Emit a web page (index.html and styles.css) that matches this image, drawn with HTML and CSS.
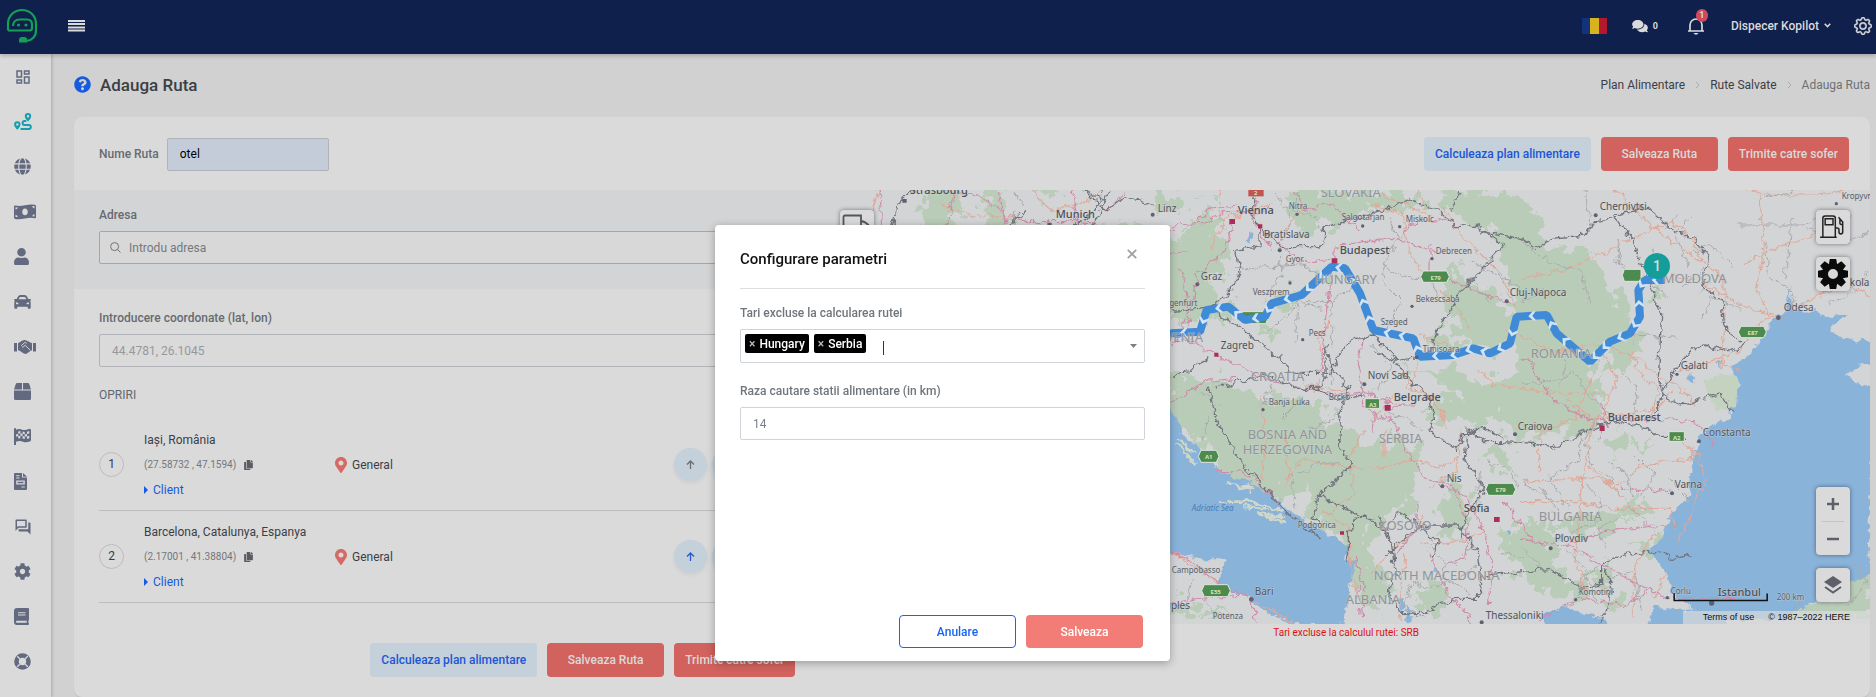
FILE: index.html
```html
<!DOCTYPE html>
<html lang="ro">
<head>
<meta charset="utf-8">
<title>Adauga Ruta</title>
<link rel="stylesheet" href="styles.css">
</head>
<body>
<svg class="defs" aria-hidden="true">
  <defs>
    <symbol id="pin" viewBox="0 0 384 512"><path d="M172.268 501.67C26.97 291.031 0 269.413 0 192 0 85.961 85.961 0 192 0s192 85.961 192 192c0 77.413-26.97 99.031-172.268 309.67-9.535 13.774-29.93 13.773-39.464 0zM192 272c44.183 0 80-35.817 80-80s-35.817-80-80-80-80 35.817-80 80 35.817 80 80 80z"/></symbol>
    <symbol id="copy" viewBox="0 0 448 512"><path d="M320 448v40c0 13.255-10.745 24-24 24H24c-13.255 0-24-10.745-24-24V120c0-13.255 10.745-24 24-24h72v296c0 30.879 25.121 56 56 56h168zm0-344V0H152c-13.255 0-24 10.745-24 24v368c0 13.255 10.745 24 24 24h272c13.255 0 24-10.745 24-24V128H344c-13.2 0-24-10.8-24-24zm120.971-31.029L375.029 7.029A24 24 0 0 0 358.059 0H352v96h96v-6.059a24 24 0 0 0-7.029-16.97z"/></symbol>
    <symbol id="cog" viewBox="0 0 512 512"><path d="M487.4 315.7l-42.6-24.6c4.3-23.2 4.3-47 0-70.2l42.6-24.6c4.9-2.8 7.1-8.6 5.5-14-11.1-35.6-30-67.8-54.7-94.6-3.8-4.1-10-5.1-14.8-2.3L380.8 110c-17.9-15.4-38.5-27.3-60.8-35.1V25.8c0-5.6-3.9-10.5-9.4-11.7-36.7-8.2-74.3-7.8-109.2 0-5.5 1.2-9.4 6.1-9.4 11.7V75c-22.2 7.9-42.8 19.8-60.8 35.1L88.7 85.5c-4.9-2.8-11-1.9-14.8 2.3-24.7 26.7-43.6 58.9-54.7 94.6-1.7 5.4.6 11.2 5.5 14L67.3 221c-4.3 23.2-4.3 47 0 70.2l-42.6 24.6c-4.9 2.8-7.1 8.6-5.5 14 11.1 35.6 30 67.8 54.7 94.6 3.8 4.1 10 5.1 14.8 2.3l42.6-24.6c17.9 15.4 38.5 27.3 60.8 35.1v49.2c0 5.6 3.9 10.5 9.4 11.7 36.7 8.2 74.3 7.8 109.2 0 5.5-1.2 9.4-6.1 9.4-11.7v-49.2c22.2-7.9 42.8-19.8 60.8-35.1l42.6 24.6c4.9 2.8 11 1.9 14.8-2.3 24.7-26.7 43.6-58.9 54.7-94.6 1.5-5.5-.7-11.3-5.6-14.1zM256 336c-44.1 0-80-35.9-80-80s35.9-80 80-80 80 35.9 80 80-35.9 80-80 80z"/></symbol>
    <symbol id="pump" viewBox="0 0 28 26"><g fill="none" stroke="currentColor" stroke-width="1.6"><path d="M3 24V3.500Q3 1 5.500 1h8.500Q16.500 1 16.500 3.500V24M0 24.200h18M5.500 4h8.500v6.500h-8.500zM16.500 14h2q2 0 2 2v2.500q0 2 2 2t2-2V7.500L20 2.500M21.500 4.500v4.500q0 1.500 3 1.500"/></g></symbol>
  </defs>
</svg>

<header class="topbar">
  <a class="logo" href="#" aria-label="Kopilot"><svg width="32" height="36" viewBox="0 0 32 36"><g fill="none" stroke="#12a154" stroke-width="2.200"><path d="M2 22.500V16C2 7.500 8.500 2 16 2s14 5.500 14 14v6.500c0 6-4 10-9.500 10.500"/><path d="M2 22.500h21.500q2.500 0 2.500-2.500v-3.500c0-3-2-5-5-5h-7c-5 0-7 3-7 6.500"/></g><circle cx="12.500" cy="17" r="1.600" fill="#12a154"/><circle cx="20" cy="17" r="1.600" fill="#12a154"/><path d="M13 34.500v-2.500q0-3 3-3h2.500q2.500 0 2.500 2.500v3z" fill="#12a154"/></svg></a>
  <button class="icon-btn burger" type="button" aria-label="Meniu"><svg width="17" height="12" viewBox="0 0 17 12"><path d="M0 1h17M0 4h17M0 7.500h17M0 10.500h17" stroke="#dadada" stroke-width="1.800"/></svg></button>
  <nav class="top-tools">
    <button class="icon-btn flag" type="button" aria-label="Romana"><svg width="25" height="16" viewBox="0 0 25 16"><path fill="#123279" d="M0 0h8v16H0z"/><path fill="#d9b31f" d="M8 0h9v16H8z"/><path fill="#b21a2c" d="M17 0h8v16h-8z"/></svg></button>
    <button class="icon-btn chat" type="button"><svg width="16" height="14" viewBox="0 0 576 512"><path fill="#dadada" d="M416 192c0-88.400-93.100-160-208-160S0 103.600 0 192c0 34.300 14.100 65.900 38 92-13.400 30.200-35.500 54.200-35.800 54.500-2.200 2.300-2.800 5.700-1.500 8.700S4.800 352 8 352c36.600 0 66.900-12.300 88.700-25 32.200 15.700 70.300 25 111.300 25 114.900 0 208-71.600 208-160zm122 220c23.900-26 38-57.700 38-92 0-66.900-53.500-124.200-129.300-148.100.9 6.600 1.300 13.300 1.300 20.100 0 105.900-107.700 192-240 192-10.800 0-21.300-.8-31.700-1.900C207.800 439.600 281.800 480 368 480c41 0 79.100-9.200 111.300-25 21.800 12.700 52.100 25 88.700 25 3.200 0 6.100-1.900 7.300-4.800 1.300-2.900.7-6.300-1.500-8.700-.3-.3-22.400-24.200-35.800-54.500z"/></svg><span>0</span></button>
    <button class="icon-btn bell" type="button" aria-label="Notificari"><svg width="18" height="18" viewBox="0 0 18 18"><path d="M1 14h16M3 14V8a6 6 0 0 1 12 0v6" fill="none" stroke="#dadada" stroke-width="1.700"/><path d="M6.500 16h5q-.8 1.800-2.500 1.800T6.500 16z" fill="#dadada"/></svg><span class="badge">1</span></button>
    <button class="icon-btn account" type="button">Dispecer Kopilot<svg width="7" height="5" viewBox="0 0 7 5"><path d="M.7.8l2.800 2.800L6.300.8" fill="none" stroke="#dadada" stroke-width="1.500"/></svg></button>
    <button class="icon-btn gear" type="button" aria-label="Setari"><svg width="18" height="18" viewBox="0 0 16 16" fill="#dadada" stroke="#dadada" stroke-width=".5"><path d="M8 4.754a3.246 3.246 0 1 0 0 6.492 3.246 3.246 0 0 0 0-6.492zM5.754 8a2.246 2.246 0 1 1 4.492 0 2.246 2.246 0 0 1-4.492 0z"/><path d="M9.796 1.343c-.527-1.790-3.065-1.790-3.592 0l-.094.319a.873.873 0 0 1-1.255.52l-.292-.16c-1.640-.892-3.433.902-2.540 2.541l.159.292a.873.873 0 0 1-.52 1.255l-.319.094c-1.790.527-1.790 3.065 0 3.592l.319.094a.873.873 0 0 1 .52 1.255l-.16.292c-.892 1.640.901 3.434 2.541 2.540l.292-.159a.873.873 0 0 1 1.255.52l.094.319c.527 1.790 3.065 1.790 3.592 0l.094-.319a.873.873 0 0 1 1.255-.52l.292.16c1.640.893 3.434-.902 2.540-2.541l-.159-.292a.873.873 0 0 1 .52-1.255l.319-.094c1.790-.527 1.790-3.065 0-3.592l-.319-.094a.873.873 0 0 1-.52-1.255l.16-.292c.893-1.640-.902-3.433-2.541-2.540l-.292.159a.873.873 0 0 1-1.255-.52l-.094-.319zm-2.633.283c.246-.835 1.428-.835 1.674 0l.094.319a1.873 1.873 0 0 0 2.693 1.115l.291-.16c.764-.415 1.600.42 1.184 1.185l-.159.292a1.873 1.873 0 0 0 1.116 2.692l.318.094c.835.246.835 1.428 0 1.674l-.319.094a1.873 1.873 0 0 0-1.115 2.693l.16.291c.415.764-.42 1.600-1.185 1.184l-.291-.159a1.873 1.873 0 0 0-2.693 1.116l-.094.318c-.246.835-1.428.835-1.674 0l-.094-.319a1.873 1.873 0 0 0-2.692-1.115l-.292.16c-.764.415-1.600-.42-1.184-1.185l.159-.291A1.873 1.873 0 0 0 1.945 8.930l-.319-.094c-.835-.246-.835-1.428 0-1.674l.319-.094A1.873 1.873 0 0 0 3.060 4.377l-.16-.292c-.415-.764.42-1.600 1.185-1.184l.292.159a1.873 1.873 0 0 0 2.692-1.115l.094-.319z"/></svg></button>
  </nav>
</header>

<div class="shell">
  <nav class="sidebar" aria-label="Navigare">
    <a href="#" aria-label="Panou"><svg width="18" height="18" viewBox="0 0 24 24"><path d="M19 5v2h-4V5h4M9 5v6H5V5h4m10 8v6h-4v-6h4M9 17v2H5v-2h4M21 3h-8v6h8V3zM11 3H3v10h8V3zm10 8h-8v10h8V11zm-10 4H3v6h8v-6z"/></svg></a>
    <a class="active" href="#" aria-label="Rute"><svg width="18" height="17" viewBox="0 0 18 17"><path d="M3.300 8.200A3.200 3.200 0 0 0 .1 11.400c0 1.800 1.400 3.400 3.200 5.400 1.800-2 3.200-3.600 3.200-5.400a3.200 3.200 0 0 0-3.200-3.200zm0 2a1.200 1.200 0 1 1 0 2.400 1.200 1.200 0 0 1 0-2.400zM14 0a3.200 3.200 0 0 0-3.200 3.200c0 1.800 1.400 3.400 3.200 5.400 1.800-2 3.200-3.600 3.200-5.400A3.200 3.200 0 0 0 14 0zm0 2a1.200 1.200 0 1 1 0 2.400A1.200 1.200 0 0 1 14 2z"/><path d="M6.500 15.900h8.300a1.800 1.800 0 0 0 0-4h-4.200a2 2 0 0 1 0-4h1.700" fill="none" stroke="currentColor" stroke-width="2"/></svg></a>
    <a href="#" aria-label="Harta"><svg width="17" height="17" viewBox="0 0 496 512"><path d="M336.500 160C322 70.700 287.800 8 248 8s-74 62.700-88.500 152h177zM152 256c0 22.200 1.200 43.500 3.300 64h185.300c2.100-20.500 3.300-41.800 3.300-64s-1.200-43.500-3.300-64H155.300c-2.100 20.500-3.300 41.800-3.300 64zm324.700-96c-28.600-67.900-86.500-120.400-158-141.600 24.400 33.800 41.200 84.700 50 141.600h108zM177.200 18.400C105.800 39.600 47.800 92.100 19.300 160h108c8.700-56.900 25.500-107.800 49.900-141.600zM487.400 192H372.700c2.100 21 3.300 42.500 3.300 64s-1.200 43-3.300 64h114.600c5.500-20.500 8.600-41.800 8.600-64s-3.100-43.500-8.500-64zM120 256c0-21.500 1.200-43 3.300-64H8.600C3.200 212.500 0 233.800 0 256s3.200 43.500 8.600 64h114.600c-2-21-3.200-42.500-3.200-64zm39.500 96c14.500 89.300 48.700 152 88.500 152s74-62.700 88.500-152h-177zm159.300 141.600c71.400-21.200 129.400-73.700 158-141.600h-108c-8.800 56.900-25.600 107.800-50 141.600zM19.300 352c28.600 67.900 86.500 120.400 158 141.600-24.400-33.800-41.200-84.700-50-141.600h-108z"/></svg></a>
    <a href="#" aria-label="Costuri"><svg width="22" height="16" viewBox="0 0 22 16"><path fill-rule="evenodd" d="M0 2.500q0-1.300 1.300-1 4.200 1 9.700-.3T20.800.7q1.200.3 1.200 1.500v11q0 1.300-1.300 1-4.200-1-9.700.3t-9.800.5Q0 14.700 0 13.500zM11 4.600c-1.600 0-2.800 1.500-2.800 3.300s1.200 3.300 2.800 3.300 2.800-1.500 2.800-3.300S12.600 4.600 11 4.600zM1.500 3.300v2.200q2 0 2.200-2zM20.500 2.300q-2-.4-2.200 0 .2 2 2.200 2.200zM1.500 13v-2.200q2 .2 2.200 2.200zM20.500 12.500v-2.200q-2 .2-2.200 2z"/></svg></a>
    <a href="#" aria-label="Soferi"><svg width="15" height="17" viewBox="0 0 448 512"><path d="M224 256c70.700 0 128-57.300 128-128S294.700 0 224 0 96 57.300 96 128s57.300 128 128 128zm89.600 32h-16.700c-22.200 10.200-46.900 16-72.900 16s-50.600-5.800-72.900-16h-16.700C60.200 288 0 348.200 0 422.400V464c0 26.500 21.500 48 48 48h352c26.500 0 48-21.500 48-48v-41.600c0-74.200-60.200-134.400-134.400-134.400z"/></svg></a>
    <a href="#" aria-label="Vehicule"><svg width="17" height="14" viewBox="0 0 17 14"><path fill-rule="evenodd" d="M3.800 1.800Q4.500 0 6.500 0h4q2 0 2.700 1.800L14.200 4H16q1 0 1 .8t-.9.900H16q.7.600.7 1.800v5.300q0 .9-.9.900h-1.200q-.9 0-.9-.9v-1H3.300v1q0 .9-.9.900H1.200q-.9 0-.9-.9V7.500q0-1.200.7-1.800H.9Q0 5.600 0 4.800T1 4h1.800zM4.700 4.300h7.600l-.8-1.700q-.3-.7-1-.7h-4q-.7 0-1 .7zM2 7.200v1.200q0 .9 1.300.9t1.400-.6Q4.500 7.300 2 7.200zm13 0q-2.500.1-2.700 1.500 0 .6 1.400.6T15 8.400z"/></svg></a>
    <a href="#" aria-label="Parteneri"><svg width="22" height="14" viewBox="0 0 22 14"><path d="M0 3h3v8.500H0zM19 3h3v8.500h-3z"/><path d="M4 3.200L8 .8Q10.500-.6 13 .8l5 2.400v7.300h-1l-4 3q-2 1-4-.4L5.200 10.500H4z"/><path d="M7.200 5.700l4-3.500 1.600 1.300M11.200 5.200l5 5M8 7q1.500.5 3.200-1.800" fill="none" stroke="#dadada" stroke-width=".9"/></svg></a>
    <a href="#" aria-label="Marfa"><svg width="17" height="17" viewBox="0 0 512 512"><path d="M509.500 184.600L458.900 32.800C452.400 13.200 434.100 0 413.400 0H272v192h238.700c-.4-2.500-.4-5-1.200-7.400zM240 0H98.600c-20.700 0-39 13.200-45.500 32.800L2.500 184.600c-.8 2.400-.8 4.900-1.200 7.400H240V0zM0 224v240c0 26.500 21.500 48 48 48h416c26.500 0 48-21.500 48-48V224H0z"/></svg></a>
    <a href="#" aria-label="Curse"><svg width="17" height="17" viewBox="0 0 17 17"><path fill-rule="evenodd" d="M0 1a1 1 0 0 1 2 0v.8q3-1.200 5.500-.3t5 .3l3-1Q17 1 17 2v10q0 .8-.8 1.200-4 1.800-7.200.5-3.300-1.200-7 .1V17H0zM4.200 3.400v2.300l2.200-.4V3zM8.600 3.400v2.300l2.200.5V3.900zM13 3.700v2.400l2.300-.7V3zM6.400 5.300v2.500l2.200.3V5.700zM10.800 6.200v2.400l2.200-.2V6.100zM2 6.500v2.300l2.200-.7V5.700zM4.200 8.100v2.400l2.200-.3V7.800zM8.600 8.100v2.500l2.200.5V8.600zM13 8.400v2.500l2.300-.7V7.800z"/></svg></a>
    <a href="#" aria-label="Documente"><svg width="13" height="17" viewBox="0 0 13 17"><path fill-rule="evenodd" d="M0 1q0-1 1-1h7v4.500h5V16q0 1-1 1H1q-1 0-1-1zM9 0l4 3.700H9zM2.200 2.200v1h3.300v-1zM2.200 4.400v1h3.300v-1zM2.200 7.500v4h8.600v-4zM3.500 8.700h6v1.600h-6zM7.500 13.500v1h3.300v-1z"/></svg></a>
    <a href="#" aria-label="Mesaje"><svg width="18" height="18" viewBox="0 0 24 24"><path d="M15 4v7H5.170L4 12.170V4h11m1-2H3c-.55 0-1 .45-1 1v14l4-4h10c.55 0 1-.45 1-1V3c0-.55-.45-1-1-1zm5 4h-2v9H6v2c0 .55.45 1 1 1h11l4 4V7c0-.55-.45-1-1-1z"/></svg></a>
    <a href="#" aria-label="Setari"><svg width="17" height="17"><use href="#cog"/></svg></a>
    <a href="#" aria-label="Manual"><svg width="15" height="17" viewBox="0 0 15 17"><path fill-rule="evenodd" d="M0 3q0-3 3-3h11q1 0 1 1v10.500q0 .6-.5.900-.3 1.200 0 2.500.5.200.5.700v.4q0 1-1 1H3q-3 0-3-3zM4 4.200v1h7.500v-1zM4 6.400v1h7.500v-1zM3 12.800q-1 0-1 1t1 1h9.700v-2z"/></svg></a>
    <a href="#" aria-label="Ajutor"><svg width="17" height="17" viewBox="0 0 17 17"><circle cx="8.500" cy="8.500" r="6" fill="none" stroke="currentColor" stroke-width="4.600"/><path d="M3.200 3.200l2.600 2.600M13.800 3.200l-2.600 2.600M3.200 13.800l2.600-2.600M13.800 13.800l-2.600-2.600" stroke="#dadada" stroke-width="1.300"/></svg></a>
  </nav>

  <main class="page">
    <div class="page-head">
      <svg class="help" width="17" height="17" viewBox="0 0 512 512"><path d="M504 256c0 136.997-111.043 248-248 248S8 392.997 8 256C8 119.083 119.043 8 256 8s248 111.083 248 248zM262.655 90c-54.497 0-89.255 22.957-116.549 63.758-3.536 5.286-2.353 12.415 2.715 16.258l34.699 26.310c5.205 3.947 12.621 3.008 16.665-2.122 17.864-22.658 30.113-35.797 57.303-35.797 20.429 0 45.698 13.148 45.698 32.958 0 14.976-12.363 22.667-32.534 33.976C247.128 238.528 216 254.941 216 296v4c0 6.627 5.373 12 12 12h56c6.627 0 12-5.373 12-12v-1.333c0-28.462 83.186-29.647 83.186-106.667 0-58.002-60.165-102-116.531-102zM256 338c-25.365 0-46 20.635-46 46 0 25.364 20.635 46 46 46s46-20.636 46-46c0-25.365-20.635-46-46-46z"/></svg>
      <h1>Adauga Ruta</h1>
      <nav class="crumbs" aria-label="Locatie">
        <a href="#">Plan Alimentare</a>
        <svg width="5" height="8" viewBox="0 0 5 8"><path d="M1 1l3 3-3 3"/></svg>
        <a href="#">Rute Salvate</a>
        <svg width="5" height="8" viewBox="0 0 5 8"><path d="M1 1l3 3-3 3"/></svg>
        <span>Adauga Ruta</span>
      </nav>
    </div>

    <section class="card">
      <div class="card-head">
        <label for="route-name">Nume Ruta</label>
        <input class="field name" id="route-name" type="text" value="otel">
        <div class="actions">
          <button class="btn soft" type="button">Calculeaza plan alimentare</button>
          <button class="btn red" type="button">Salveaza Ruta</button>
          <button class="btn red" type="button">Trimite catre sofer</button>
        </div>
      </div>
      <div class="split">
        <div class="form-col">
          <div class="address">
            <label for="address">Adresa</label>
            <div class="search">
              <svg width="11" height="11" viewBox="0 0 11 11"><circle cx="4.600" cy="4.600" r="4"/><path d="M7.500 7.500l3 3"/></svg>
              <input id="address" type="text" placeholder="Introdu adresa">
            </div>
          </div>
          <div class="coords">
            <label for="coords">Introducere coordonate (lat, lon)</label>
            <input class="field" id="coords" type="text" placeholder="44.4781, 26.1045">
          </div>
          <h2>OPRIRI</h2>
          <ol class="stops">
            <li>
              <span class="num">1</span>
              <div class="place"><p>Iași, România</p><p class="pos">(27.58732 , 47.1594)<svg width="9" height="10"><use href="#copy"/></svg></p><a href="#"><svg width="4" height="8" viewBox="0 0 4 8"><path d="M0 0l4 4-4 4z"/></svg>Client</a></div>
              <div class="kind"><svg width="12" height="16"><use href="#pin"/></svg>General</div>
              <div class="moves"><button class="round off" type="button" aria-label="Sus"><svg width="9" height="9" viewBox="0 0 9 9"><path d="M4.500 9V1M1 4.500L4.500 1 8 4.500"/></svg></button><button class="round" type="button" aria-label="Jos"><svg width="9" height="9" viewBox="0 0 9 9"><path d="M4.500 0v8M1 4.500L4.500 8 8 4.500"/></svg></button></div>
            </li>
            <li>
              <span class="num">2</span>
              <div class="place"><p>Barcelona, Catalunya, Espanya</p><p class="pos">(2.17001 , 41.38804)<svg width="9" height="10"><use href="#copy"/></svg></p><a href="#"><svg width="4" height="8" viewBox="0 0 4 8"><path d="M0 0l4 4-4 4z"/></svg>Client</a></div>
              <div class="kind"><svg width="12" height="16"><use href="#pin"/></svg>General</div>
              <div class="moves"><button class="round" type="button" aria-label="Sus"><svg width="9" height="9" viewBox="0 0 9 9"><path d="M4.500 9V1M1 4.500L4.500 1 8 4.500"/></svg></button><button class="round off" type="button" aria-label="Jos"><svg width="9" height="9" viewBox="0 0 9 9"><path d="M4.500 0v8M1 4.500L4.500 8 8 4.500"/></svg></button></div>
            </li>
          </ol>
          <div class="actions bottom">
            <button class="btn soft" type="button">Calculeaza plan alimentare</button>
            <button class="btn red" type="button">Salveaza Ruta</button>
            <button class="btn red" type="button">Trimite catre sofer</button>
          </div>
        </div>

        <div class="map-col">
          <div class="map">
            <svg class="tiles" viewBox="820 190 1048 434" preserveAspectRatio="xMaxYMin slice" role="img" aria-label="Harta rutei">
              <defs>
                <filter id="rough" x="0" y="0" width="100%" height="100%"><feTurbulence type="fractalNoise" baseFrequency=".12" numOctaves="3" seed="4"/><feDisplacementMap in="SourceGraphic" scale="10" xChannelSelector="R" yChannelSelector="G"/></filter>
                <filter id="patchy" x="0" y="0" width="100%" height="100%"><feTurbulence type="fractalNoise" baseFrequency=".07" numOctaves="4" seed="9"/><feDisplacementMap in="SourceGraphic" scale="40" xChannelSelector="R" yChannelSelector="G"/></filter>
              </defs>
              <rect x="820" y="190" width="1049" height="434" fill="#d3d4d6"/>
              <g filter="url(#patchy)"><g transform="translate(1170 185) scale(.33333)" fill="#b9ccb7">
                <path d="M-760 60l60-45h80l-40 110-70 60zM-560 40l50-20 20 90-60 40zM-1000 160l90-20 20 40-90 40zM-420 15h60v30zM-60 15h60l20 50-70 30zM-260 150l120-40 120 60 120-50 60 60-40 130-50 60-60-20-50 80h-130z"/>
                <path d="M0 180l100-50 60 20 20 70-60 80-60 40-70-20-20-60zM0 330l140-10 60 60-60 20H20l-30-30zM30 120l80-30 40 30-60 30zM90 20h60v40zM340 40l160-20 230 0 40 30-80 40-60-20-90 20-120 50-70-20zM800 20h250v120l-60 10-110-40-70-50zM410 300l40-60 30 20-20 40zM320 340l50-20-10 40-60 20zM260 440l40-10 20 30-40 10z"/>
                <path d="M1050 40l40 60 40 80 110 10 60 60 30 90 60 70 20 90-30 20-90-20-60 110 60 70-20 70-150-10-90 40-60-80-60 20-40-80-60-50-100-30 100-10 130 40 100-20 10-80-70-60 60-80-20-60-50-110z"/>
                <path d="M820 300l40-60 20 60 80 10 60 70-20 100-60 30-90-80-30-80zM830 640l80-20 60 20 60 30-90 50-100-10-80-20 60-50zM760 460l60-30 60 60-90 20zM1200 600l90-20 30-100 70-20 10 50-100 60-30 100-70 10zM1440 300l20-60 10 90-40 40z"/>
                <path d="M0 560l100 20 90 20 80 50 80-20 80 20 60 70 100 60 120 50 20 90-60 80-60-20-40 60-60-80-120-40-90 0-60 80-80-110-80-120-80-60-60-50z"/>
                <path d="M580 800l110-50 60 60-20 80-80 20 100 50-60 30-70-40-40 30-60-50-60-20 80-20zM820 900l50-20 30 60-10 70-70 60-20-60zM440 880l70 20 130 80-50 100 60 110-20 80-110-50 20-120-80-80-80 0zM1050 1000l80 30 40 60-20 80-80-20-50-80zM1150 1000l160-20 80 30-100 30-140 0zM1340 960l80-20 10 50-80 10zM1060 1060l100 50 20 70 80 10-40 60-100-30-90-60zM1250 1160l60-20 10 60-40 20zM1370 1080l60-20 80 30v30l-80-10zM980 1030l60 20 60 100-80-20zM940 800l60-20 30 60-60 20zM720 1230l60-40 60 40-50 70z"/>
                <path d="M1620 1240l100 20 150-10 140-20 80-20v90h-440zM1900 1210l80-60 60-20 60-10v90l-100 20zM1310 770l40-40 20 60-40 30zM1380 780l70-10-30 40zM1270 1240l60 0 30 30-60 0z"/>
                <path d="M0 1290l60-40 30 50H0zM80 1290l60-20 60 20z"/>
              </g></g>
              <g filter="url(#rough)"><g transform="translate(1170 185) scale(.33333)">
                <g fill="#8ab3da">
                  <path d="M-1050 1000L0 1105l90 18 70 0-8 50-20 30 40 15 70 32 60 38 60 30 160 5 4-95 20-55 8-48-34-4-20-52-70-45-80-45-50-50-70-40-90-30-10-30-45-35-45-40-30-60-30-50-20-70z"/>
                  <path d="M2110 472l-60-6-60-14-10-30 50-34-70 8-35-20-100 4-25 30-25 50-50 55-40 25-5 40 5 20-5 40-10 62-54 22-30 34-20 40-10 95-10 55-50 35-17 70-48 42 25 30 30 40 15 60 50 40 70 30 110 10 100 2 50-32 50-30 85-50 73-18z"/>
                  <path d="M1130 1330l-20-40 70-25 60 25 60 5 10 40zM1420 1330l30-65 80 10 120-5 20 60zM675 1240l20 0 8 30-20 10zM705 1265l15 10-5 40-15-10zM500 1070l30 15 8 30-30-10zM225 170l10-30 8 5-10 30zM1550 580l8-25 8 40-12-5zM1645 560l-5-30 8 0zM1855 300l8 80-16-4zM1955 330l10-60 4 40zM1000 1040l15-8 10 15-15 5zM780 1160l10-12 8 12z"/>
                </g>
                <path fill="#c3d3bf" d="M1600 590l50-20 40 0 12 30-6 65-60 15-30-50z"/>
                <path fill="#d3d4d6" d="M2020 570l40-25 50-10v75l-60-20zM190 900l40-5 15 12-35 8z"/>
                <path d="M10 775l60 60M20 760l50 50M170 950l60 0 70 15 30 20M215 965l80 10M260 988l80 10M165 895l80 20M290 1000l50 10M145 950h18" fill="none" stroke="#cfd8c8" stroke-width="8"/>
                <g fill="none" stroke="#dfa999" stroke-width="3.500">
                  <path d="M145 15l5 90M270 640l10 120-10 120M400 600l130 20M340 735l10 170M340 880l60-60 130 30 100 0 90-30 80 30 60-30M640 735v80M700 560l10 50 80 30 40 90M660 640l-60 70M740 520l-20 100M920 550l50 50 140 20 200 10M800 310l50 50 40 70M830 480l-90-30M1000 430l150 70 150-20 100 40 60 60 60 20 50 60M810 60l60 90 60 60 60 60 40 90M740 15l20 60M1050 280l120-20 130-60 100-50 100-40 70 60 20 60M1330 15l100 100 90 70 80 50 60 50 0 120-10 150M1700 0l80 30 160 0 100-20M1765 30l10 150-20 130 40 90M1720 230l200-80 120-60M1520 560l180-60 60-80 60-30M1500 270l100 30 110 60 120 40M1860 380l100-60 80-20 60 40M1380 430l10 120 70 60-20 90M1280 500l60 80-50 100-40 60M1180 640l80 60 200-30 40-50M1270 560l-60 140-100 40-10 120M1260 740l-30 150-20 230 40 130M1050 890l200-10 100 20 60-60 160-20M1050 950h160l100 20 180 0 20 60M1530 770l50 40 20 70-30 80-50 110M1250 840l80 70 70 80M1380 1300l10-160 60-100"/>
                  <path d="M870 740l-20 120-80 50M580 735l-50 80 20 110-70 60M450 970l80 60 10 140 30 100M600 1160l60-60 60-50 40-70M700 1110l-20 150 10 50M740 1080l120-10 80-30M0 1105l100 60 60 60M200 1225l100 50 60 38M1450 1240l30-80M-880 15l-30 110 40 130M-700 60l90 30 160 10M-420 15l60 60 90-20 60-40M1700 560l-60-30"/>
                  <path d="M480 400l-40 60 10 90-20 80M120 190l40-90 130-40M400 60l-60 70M590 60l100 20 20 110 50 90M630 30l150 60"/>
                </g>
                <g fill="none" stroke="#cf8ba8" stroke-width="3.500">
                  <path d="M0 120l100-5 60-35h110l30-20M80 110l30-40 90-10M180 110l-20 90-80 60-40 200 90 50 90 40 80 40 200 40 80-10 100 40 50 0M265 125l80 70 60 40 80-10M300 190l-60 -90 20-85M490 180l0 50-20 90-20 200 0 40M500 180l160-20 40 10 90 30M570 450l-10 80 20 130 20 30 60 10 50 100 50 80 80 20 50 120-10 100-60 20M660 670l40-10M610 680l-10 60M690 160l20-40 120-20M775 180l0 90 60 10M830 285l100 40 90 30M30 250l20 130-40 100M0 650l100-60 90-10M370 15l30 60 80-20 80 80M-880 15l10 100-50 90M-650 15l-20 100-90 60M-640 20l70 20 80 50 60 20 200 0M-520 15l30 130M-300 15l20 100 120 20 100 40M-200 80l60-60M-170 150l100 60 120-10M-130 140l140-10M-450 140l200 10M-760 120l40 60"/>
                  <path d="M1050 520l30 10 10 40 60 80 100 50 60 0 200 5 70 10 50 70M1290 650l10 60-20 60M1350 910l150 10M1050 1060l30 10 100 10 120 60 100 60 90 40 70 0 130 0M1190 1080l110-40 140-20M1100 1310l120-70 150 20 60-50M130 860l80 0 60 40 60 70M800 900l80 30 60 110 20 100-10 120M1000 950l80 120M770 1100l60 130 60 60 10 30M670 1110l60-70 10-80M0 1105l70 25 30 40 140 80M0 1260l80-20 140-10M235 1250l20 60M560 1200l10 100M550 1110l30 110"/>
                </g>
                <g fill="none" stroke="#a9a9ac" stroke-width="3">
                  <path d="M310 15l50 90-30 60M380 15l-20 60 70 20 40 70M190 250l200-10 70 40M330 190v80l-60 80M400 350l80 0 70-50M290 440l90-80M370 470l10-120 70 20M480 350l0 140M640 230l-10 60 60 60-50 90M650 100l30 60-40 80 60 40 80 0 20 60M860 320l40-40 60 80M900 230l80 40 70 50M1050 170l80 60 100 30 20 100M1110 320l-60 30M1240 15l20 120M1340 160l0 80M1330 230l80 60-20 160 130 10M1450 180l-30 100 80 60M1560 90l-50 60 40 100M1480 130l40-40M1560 200l60-20 60 70M1580 330l60-60M1590 400l30-60 90 30M1600 250l-60 50M1700 120l200 0 60-40M1780 40l80-20 40-60M1780 170l10 100 80 60-20 60-60 30M1860 100l-20 180M1910 130l120 40 60-30M1970 360l80-40 40-60M1160 600l40-40 60 80 60 60M1180 520l0 60-130 20M1350 560l50 60-20 80M1230 760l0 60-100 60 60 90M1280 700l-40 60 20 80M1240 890l50 60-20 70-80 20M1290 850l60 80M1300 830l60 30 20 70M1390 810l60 60-40 60M1100 900l60 80M1340 1000l-60 30 20 60M1340 1110l-100 60 40 80M1050 890l100 60M1490 880l60 60M1380 970l60 60 80-10M1390 1160l20 120M1300 1180l80-20M1050 1090l60 60M1180 1090l60 60-20 80M-450 60l-20 -45M-470 80l-20 120M600 620l40-30M640 680l60 20 50 40M520 650l-40 60-70 20M470 540l10 60M600 480l60 60-20 50M300 600l-20 60M390 640l-60 60M80 620l60 40M110 690l-20 80"/>
                  <path d="M380 870l60-40 90 10M360 860l10 110M720 1190l60 20 60-20 60 40M720 1190l-20 80 60 30M780 1090l40 50-10 60M860 1180l60-40M900 1080l-50 60M940 830l80 20 20 60M930 850l-10 110M980 1100l80 20M90 1240l60 60M60 1180l-20 90M1700 1300l60-60M1850 1300l40-60M2040 1130l50 60-60 70"/>
                </g>
                <g fill="none" stroke="#71737d" stroke-width="4">
                  <path d="M250 15l-10 70 25 40 0 60-70 10 10 70-20 40-50 50 10 40 60 30 50 40 60 50 60 50 100 0 30-60 40-50 60-5 60 60 30 60 80 70 10 60-10 40 80 50 20 -40 60-20 60 30M265 125l60 60 120 0 20-60 80-20 90-30 80-30 80 30 60 50 60-5 80 60-70 80-60 60-30 60-40 60-20 60-90 30-80-30M840 75l20-60M930 140l120 20 40 30 50-30 100-10 30-40 60-10 50 60 40 100 50 130-10 190 20 60 50 20 60-20 60-10 30 50M1330 90l100-20 80 70 60 20 40 60 -20 80 60 50 10 80 60 50-40 20-80-20-40 10-60 80-30 60-20 60M140 360l-60 10-80 10M130 610l60-20 30 0 60-20 90 40 60 0 60 30 80-10M430 620l30-40 0-90 30 70 40 50-20 60-10 110 40 60-60 60-40 30 160 80 40 30 40-60 60 40 60 50-20 50M110 605l30 120 80 120 60 60 60 80 60 40 50 40M445 920l-20 80 20 20M600 1000l-40 0-30 40 0 90M620 1000l40 80 10 80-20 70 30 50 60 10 60-30 60-20 60 0 10-40-10-100-60-80-90 0-60 30-60 60M870 1060l10-60 60-90-60-80 10-100 50 40 60 0 100 10 40 10 80-40 60-30 80-10 60 20 50 30 70 0M940 1170l110 -10 80-10 100 60 60-10 0-60 60-30 100-10 50 20 60-10M1300 1150l20 60-20 80-30 30M-570 310l90-200 40-30M-300 130l80-60 20-80M-260 15l60 60 60-40 80 20"/>
                  <path d="M-265 15l65 30 20-30M-200 45l-30 70-90 50M-780 15l-40 40-30 110M0 575l50-20 60-40"/>
                </g>
              </g></g>
              <g transform="translate(1170 185) scale(.33333)">
                <g fill="#4d8a4e" stroke="#dfe6dd" stroke-width="3"><path d="M755 258h70l8 17-8 17h-70l-8-17zM1358 253h50v36h-50l-6-18zM212 380h70l8 18-8 18h-70l-8-18zM1708 424h68l8 17-8 17h-68l-8-17zM950 895h74l8 18-8 18h-74l-8-18zM98 1199h70l8 18-8 18H98l-8-18zM580 641h44v29h-44zM88 796h46l8 18-8 18H88l-8-18zM1492 740h46v29h-46z"/></g>
                <path d="M230 15h46v19h-46z" fill="#c4534f"/>
                <path d="M-150 470L0 445l85-5 20-65 65-10 50 40 60-10 20-40 90-25 90-85 40 5 45 75 40 110 120 25 20 55 100-5 60-20 50 15 60-30 20-80 90-5 30 55 100 85 60-60 60-25 30-50-5-80 20-30 60 0" fill="none" stroke="#3f8bd7" stroke-width="24" stroke-linejoin="bevel"/>
                <defs><path id="chev" d="M-10 0L4-14h9L2 0l11 14H4z"/></defs>
                <g fill="#d3e3f3">
                  <use href="#chev" transform="translate(35 443) rotate(-2)"/><use href="#chev" transform="translate(95 408) rotate(-73)"/><use href="#chev" transform="translate(140 370) rotate(-9)"/><use href="#chev" transform="translate(195 385) rotate(39)"/><use href="#chev" transform="translate(250 400) rotate(-10)"/><use href="#chev" transform="translate(290 375) rotate(-63)"/><use href="#chev" transform="translate(345 342) rotate(-15)"/><use href="#chev" transform="translate(410 311) rotate(-43)"/><use href="#chev" transform="translate(450 273) rotate(-43)"/><use href="#chev" transform="translate(500 248) rotate(7)"/><use href="#chev" transform="translate(543 287) rotate(59)"/><use href="#chev" transform="translate(574 350) rotate(70)"/><use href="#chev" transform="translate(592 400) rotate(70)"/><use href="#chev" transform="translate(645 443) rotate(12)"/><use href="#chev" transform="translate(690 452) rotate(12)"/><use href="#chev" transform="translate(736 490) rotate(70)"/><use href="#chev" transform="translate(790 513) rotate(-3)"/><use href="#chev" transform="translate(845 510) rotate(-10)"/><use href="#chev" transform="translate(890 495) rotate(-18)"/><use href="#chev" transform="translate(935 499) rotate(17)"/><use href="#chev" transform="translate(985 490) rotate(-27)"/><use href="#chev" transform="translate(1022 445) rotate(-76)"/><use href="#chev" transform="translate(1080 393) rotate(-3)"/><use href="#chev" transform="translate(1140 417) rotate(61)"/><use href="#chev" transform="translate(1180 466) rotate(40)"/><use href="#chev" transform="translate(1220 500) rotate(40)"/><use href="#chev" transform="translate(1270 515) rotate(-45)"/><use href="#chev" transform="translate(1300 485) rotate(-45)"/><use href="#chev" transform="translate(1345 457) rotate(-23)"/><use href="#chev" transform="translate(1390 420) rotate(-59)"/><use href="#chev" transform="translate(1402 355) rotate(86)"/><use href="#chev" transform="translate(1410 300) rotate(-56)"/><use href="#chev" transform="translate(1450 285)"/>
                </g>
                <g fill="#a82f5c"><path d="M173 102h17v15h-17zM480 220h17v15h-17zM259 118h13v12h-13zM128 503h12v12h-12zM639 660h18v17h-18zM967 996h17v15h-17zM1284 722h15v16h-15zM505 1039h12v10h-12z"/></g>
                <g fill="#5b6275"><path d="M-808 42h13v11h-13zM-373 113h13v10h-13z"/><circle cx="376" cy="88" r="5"/><circle cx="573" cy="123" r="5"/><circle cx="684" cy="125" r="5"/><circle cx="781" cy="221" r="5"/><circle cx="324" cy="196" r="6"/><circle cx="77" cy="298" r="6"/><circle cx="355" cy="294" r="5"/><circle cx="393" cy="464" r="5"/><circle cx="721" cy="364" r="5"/><circle cx="1005" cy="349" r="6"/><circle cx="735" cy="517" r="6"/><circle cx="578" cy="598" r="6"/><circle cx="274" cy="674" r="5"/><circle cx="812" cy="904" r="6"/><circle cx="1030" cy="748" r="6"/><circle cx="1272" cy="91" r="6"/><circle cx="1820" cy="398" r="7"/><circle cx="1516" cy="568" r="5"/><circle cx="1582" cy="769" r="6"/><circle cx="1501" cy="925" r="6"/><circle cx="1137" cy="1090" r="6"/><circle cx="1212" cy="1244" r="5"/><circle cx="1487" cy="1238" r="5"/><circle cx="239" cy="1243" r="7"/><circle cx="1994" cy="56" r="5"/><circle cx="1620" cy="1254" r="8"/><circle cx="930" cy="1312" r="6"/><circle cx="-57" cy="89" r="6"/></g>
              </g>
              <g class="shield"><text x="1434" y="280">E79</text><text x="1751" y="335">E87</text><text x="1499" y="492">E79</text><text x="1214" y="594">E55</text><text x="1371" y="407">A3</text><text x="1207" y="459">A1</text><text x="1675" y="440">A2</text><text x="1254" y="195">2</text></g>
              <g class="country"><text x="1319" y="197">SLOVAKIA</text><text x="1313" y="284">HUNGARY</text><text x="1249" y="381">CROATIA</text><text x="1246" y="439">BOSNIA AND</text><text x="1241" y="454">HERZEGOVINA</text><text x="1377" y="443">SERBIA</text><text x="1377" y="530">KOSOVO</text><text x="1372" y="580">NORTH MACEDONIA</text><text x="1344" y="604">ALBANIA</text><text x="1537" y="521">BULGARIA</text><text x="1529" y="358">ROMANIA</text><text x="1661" y="283">MOLDOVA</text><text x="1140" y="342">SLOVENIA</text></g>
              <g class="city"><text x="908" y="194">Strasbourg</text><text x="1054" y="218">Munich</text><text x="1236" y="214">Vienna</text><text x="1338" y="254">Budapest</text><text x="1392" y="401">Belgrade</text><text x="1462" y="512">Sofia</text><text x="1606" y="421">Bucharest</text><text x="1716" y="596">Istanbul</text></g>
              <g class="town"><text x="1156" y="212">Linz</text><text x="1262" y="238">Bratislava</text><text x="1199" y="280">Graz</text><text x="1219" y="349">Zagreb</text><text x="1366" y="379">Novi Sad</text><text x="1508" y="296">Cluj-Napoca</text><text x="1598" y="210">Chernivtsi</text><text x="1782" y="311">Odesa</text><text x="1679" y="369">Galati</text><text x="1701" y="436">Constanta</text><text x="1516" y="430">Craiova</text><text x="1445" y="482">Nis</text><text x="1673" y="488">Varna</text><text x="1553" y="542">Plovdiv</text><text x="1484" y="619">Thessaloniki</text><text x="1253" y="595">Bari</text><text x="1156" y="609">Naples</text><text x="1834" y="286">Mykolaiv</text></g>
              <g class="village"><text x="1287" y="209">Nitra</text><text x="1340" y="220">Salgotarjan</text><text x="1404" y="222">Miskolc</text><text x="1434" y="254">Debrecen</text><text x="1284" y="262">Gyor</text><text x="1251" y="295">Veszprem</text><text x="1414" y="302">Bekescsaba</text><text x="1307" y="336">Pecs</text><text x="1379" y="325">Szeged</text><text x="1421" y="352">Timisoara</text><text x="1327" y="400">Brcko</text><text x="1267" y="405">Banja Luka</text><text x="1156" y="306">Klagenfurt</text><text x="1296" y="528">Podgorica</text><text x="1170" y="573">Campobasso</text><text x="1211" y="619">Potenza</text><text x="1577" y="595">Komotini</text><text x="1669" y="594">Corlu</text><text x="1840" y="199">Kropyvnytskyi</text><text class="sea" x="1190" y="511">Adriatic Sea</text><text x="1775" y="600">200 km</text></g>
              <path d="M1672.500 593.500v7h93v-7" fill="none" stroke="#111" stroke-width="1.500"/>
            </svg>
            <button class="map-btn fuel-left" type="button" aria-label="Statii"><svg width="30" height="26" viewBox="0 0 30 26"><path d="M1.500 25V3q0-1.500 1.500-1.500h16v23M19 7q6 1 8.500 6v11" fill="none" stroke="currentColor" stroke-width="1.800"/></svg></button>
            <span class="marker">1</span>
            <button class="map-btn fuel" type="button" aria-label="Statii alimentare"><svg width="26" height="24"><use href="#pump"/></svg></button>
            <button class="map-btn params" type="button" aria-label="Parametri"><svg width="30" height="30" viewBox="0 0 30 30"><g fill="#0b0b0b"><path id="tooth" d="M11.800 0h6.400l1.200 7h-8.800z"/><use href="#tooth" transform="rotate(45 15 15)"/><use href="#tooth" transform="rotate(90 15 15)"/><use href="#tooth" transform="rotate(135 15 15)"/><use href="#tooth" transform="rotate(180 15 15)"/><use href="#tooth" transform="rotate(225 15 15)"/><use href="#tooth" transform="rotate(270 15 15)"/><use href="#tooth" transform="rotate(315 15 15)"/></g><circle cx="15" cy="15" r="7.800" fill="none" stroke="#0b0b0b" stroke-width="5.600"/></svg></button>
            <div class="zoom"><button type="button" aria-label="Mareste"><svg width="12" height="12" viewBox="0 0 12 12"><path d="M6 0v12M0 6h12"/></svg></button><button type="button" aria-label="Micsoreaza"><svg width="12" height="12" viewBox="0 0 12 12"><path d="M0 6h12"/></svg></button></div>
            <button class="map-btn layers" type="button" aria-label="Straturi"><svg width="18" height="18" viewBox="0 0 18 18"><path d="M9 0l9 6-9 6-9-6z" fill="#5d6068"/><path d="M1 11l8 5.500 8-5.500" fill="none" stroke="#5d6068" stroke-width="2"/></svg></button>
            <div class="terms"><a href="#">Terms of use</a><span>© 1987–2022 HERE</span></div>
          </div>
          <p class="warning">Tari excluse la calculul rutei: SRB</p>
        </div>
      </div>
    </section>
  </main>
</div>

<div class="backdrop">
  <form class="modal" role="dialog" aria-labelledby="modal-title">
    <div class="modal-head"><h2 id="modal-title">Configurare parametri</h2><button class="close" type="button" aria-label="Inchide"><svg width="10" height="10" viewBox="0 0 10 10"><path d="M.8.8l8.400 8.400M9.200.8L.8 9.200"/></svg></button></div>
    <label for="countries">Tari excluse la calcularea rutei</label>
    <div class="multi">
      <span class="tag"><button type="button" aria-label="Sterge Hungary">×</button>Hungary</span>
      <span class="tag"><button type="button" aria-label="Sterge Serbia">×</button>Serbia</span>
      <span class="caret"></span>
      <input id="countries" type="text">
      <svg width="7" height="4" viewBox="0 0 7 4"><path d="M0 0h7L3.500 4z" fill="#7b8087"/></svg>
    </div>
    <label for="radius">Raza cautare statii alimentare (in km)</label>
    <input class="radius" id="radius" type="text" value="14">
    <div class="modal-foot"><button class="btn outline" type="button">Anulare</button><button class="btn coral" type="submit">Salveaza</button></div>
  </form>
</div>
</body>
</html>
```
FILE: styles.css
```css
* { box-sizing: border-box; }
body {
  margin: 0;
  min-height: 100vh;
  overflow: hidden;
  background: #d1d1d1;
  color: #353a40;
  font: 12px/18px Roboto, "Noto Sans", sans-serif;
}
h1, h2, p, ol { margin: 0; padding: 0; font-weight: 400; }
a { color: inherit; text-decoration: none; }
button, input { font: inherit; color: inherit; }
button { margin: 0; padding: 0; border: 0; background: none; }
svg { display: block; flex: none; }
label { font-weight: 500; color: #666b70; }
.defs { position: absolute; width: 0; height: 0; }

.topbar {
  position: relative;
  z-index: 2;
  display: flex;
  align-items: center;
  height: 54px;
  padding: 0 4px 3px 6px;
  background: #0e204b;
  box-shadow: 0 2px 4px rgba(0, 0, 0, .2);
}
.icon-btn { display: flex; align-items: center; color: #dadada; }
.burger { margin-left: 30px; }
.top-tools { display: flex; align-items: center; margin-left: auto; }
.chat { gap: 5px; margin-left: 25px; font-size: 9px; font-weight: 700; }
.bell { position: relative; margin-left: 29px; }
.badge {
  position: absolute;
  left: 9px;
  top: -8px;
  width: 12px;
  height: 13px;
  border-radius: 6px;
  background: #d0495c;
  font-size: 9px;
  font-weight: 700;
  line-height: 13px;
  text-align: center;
}
.account { gap: 5px; margin-left: 26px; font-weight: 500; }
.gear { margin-left: 23px; }

.shell { display: flex; min-height: 643px; }
.sidebar {
  display: grid;
  grid-auto-rows: 45px;
  flex: none;
  width: 51px;
  background: #dadada;
  box-shadow: 1px 0 3px rgba(0, 0, 0, .2);
  color: #636a80;
}
.sidebar a { display: flex; align-items: center; padding-left: 14px; }
.sidebar svg { fill: currentColor; }
.sidebar .active { color: #149fae; }

.page { flex: 1; min-width: 0; padding: 19px 6px 0 23px; }
.page-head { display: flex; align-items: center; height: 23px; margin: 0 0 21px; }
.help { fill: #155adf; }
h1 { margin-left: 9px; font-size: 17px; font-weight: 500; color: #3a3f44; }
.crumbs { display: flex; align-items: center; gap: 10px; margin-left: auto; color: #3a3f47; }
.crumbs svg { fill: none; stroke: #a9abae; }
.crumbs span { color: #6d7175; }

.card { border-radius: 8px; background: #dadada; box-shadow: 0 1px 1px #bdbdbd; }
.card-head { display: flex; align-items: center; height: 73px; padding: 20px 21px 19px 25px; }
.field {
  width: 100%;
  height: 33px;
  padding: 0 12px;
  border: 1px solid #b0b3b7;
  border-radius: 2px;
  background: none;
  outline: 0;
}
.field::placeholder { color: #95989c; opacity: 1; }
.field.name { width: 162px; margin-left: 8px; background: #c5ccd9; color: #000; }
.actions { display: flex; gap: 10px; margin-left: auto; }
.btn { height: 34px; padding: 0 11px; border-radius: 4px; font-weight: 500; text-align: center; }
.soft { background: #c4d0da; color: #1c56d6; }
.red { min-width: 117px; background: #d1625d; color: #dadada; }

.split { display: grid; grid-template-columns: 5fr 7fr; }
.address { height: 99px; padding: 16px 0 0 25px; background: #d3d4d6; }
.search {
  display: flex;
  align-items: center;
  gap: 6px;
  height: 33px;
  margin: 7px 25px 0 0;
  padding: 0 10px;
  border: 1px solid #a4a6aa;
  border-radius: 2px;
  background: #d8d8d9;
}
.search svg { fill: none; stroke: #6e7276; }
.search input { flex: 1; border: 0; background: none; outline: 0; }
.search input::placeholder { color: #75787c; opacity: 1; }
.coords { padding: 20px 25px 0; }
.coords label { display: block; margin-bottom: 7px; }
.form-col h2 { margin: 19px 25px 0; font-size: 12px; line-height: 18px; color: #62676c; }
.stops { margin: 15px 0 0 25px; list-style: none; }
.stops li {
  display: grid;
  grid-template-columns: 45px 191px 1fr auto;
  align-items: center;
  height: 92px;
  border-bottom: 1px solid #bdbdbd;
}
.num { width: 25px; height: 25px; border: 1px solid #bcbcbc; border-radius: 50%; line-height: 23px; text-align: center; }
.place { display: grid; gap: 7px; color: #3a3f47; }
.pos { display: flex; align-items: center; gap: 8px; font-size: 10px; color: #73777b; }
.pos svg { fill: #5a5d63; }
.place a { display: flex; align-items: center; gap: 5px; color: #155adf; }
.place a svg { fill: #155adf; }
.kind { display: flex; align-items: center; gap: 5px; color: #3a3f47; }
.kind svg { fill: #d56a65; }
.moves { display: flex; gap: 5px; padding-right: 77px; }
.round {
  display: grid;
  place-items: center;
  width: 33px;
  height: 33px;
  border-radius: 50%;
  background: #c4d0da;
  box-shadow: 0 2px 4px rgba(0, 0, 0, .06);
  color: #2858cf;
}
.round.off { color: #6a6e74; }
.round svg { fill: none; stroke: currentColor; stroke-width: 1.3; }
.bottom { justify-content: flex-end; padding: 40px 27px 20px 0; }

.map { position: relative; height: 434px; overflow: hidden; }
.tiles { width: 100%; height: 100%; font-family: "Noto Sans", sans-serif; }
.tiles text { stroke: #d3d4d6; stroke-width: 1px; paint-order: stroke; stroke-opacity: .6; }
.country { font-size: 13px; fill: #8f9498; }
.city { font-size: 11px; font-weight: 500; fill: #4c5057; }
.town { font-size: 10px; fill: #50555e; }
.village { font-size: 8px; fill: #595e68; }
.village .sea { fill: #487cb5; stroke: none; font-style: italic; }
.tiles .shield text { font-size: 6px; font-weight: 700; fill: #d6e4b4; text-anchor: middle; stroke: none; }
.map-btn, .zoom {
  position: absolute;
  display: grid;
  place-items: center;
  right: 20px;
  width: 34px;
  height: 34px;
  border-radius: 4px;
  background: #dadada;
  box-shadow: 0 0 4px rgba(15, 22, 33, .5);
  color: #222;
}
.fuel-left { top: 20px; right: auto; left: 18px; color: #50565c; }
.fuel { top: 20px; }
.params { top: 67px; }
.zoom { bottom: 69px; height: 68px; }
.zoom button { display: grid; place-items: center; width: 22px; height: 34px; }
.zoom button + button { border-top: 1px solid #c4c4c4; }
.zoom svg { stroke: #5d6068; stroke-width: 2.5; }
.layers { bottom: 22px; }
.marker {
  position: absolute;
  top: 63px;
  right: 200px;
  width: 26px;
  height: 26px;
  border-radius: 50%;
  background: #139e99;
  color: #dadada;
  font-size: 14px;
  font-weight: 500;
  line-height: 26px;
  text-align: center;
}
.terms {
  position: absolute;
  right: 0;
  bottom: 0;
  display: flex;
  gap: 14px;
  padding: 0 20px;
  background: rgba(218, 218, 218, .7);
  color: #111;
  font: 9px/13px "Liberation Sans", Arial, sans-serif;
}
.warning { font-size: 10px; color: #dd1111; text-align: center; }

.backdrop {
  position: fixed;
  inset: 0;
  z-index: 3;
  display: flex;
  align-items: flex-start;
  justify-content: center;
  padding: 225px 0 0 9px;
}
.modal {
  display: flex;
  flex-direction: column;
  width: 455px;
  padding: 24px 25px 13px;
  border-radius: 4px;
  background: #fff;
  box-shadow: 0 2px 8px rgba(0, 0, 0, .3);
}
.modal label { color: #70767c; }
.modal-head {
  display: flex;
  justify-content: space-between;
  height: 40px;
  margin-bottom: 15px;
  border-bottom: 1px solid #dcdee0;
}
.modal-head h2 { font-size: 15px; line-height: 20px; font-weight: 500; color: #111; }
.close { display: flex; height: 10px; padding-right: 8px; }
.close svg { fill: none; stroke: #9fa1a4; stroke-width: 1.8; }
.multi {
  display: flex;
  align-items: center;
  gap: 5px;
  height: 34px;
  margin: 7px 0 19px;
  padding: 0 7px 0 4px;
  border: 1px solid #ced4da;
  border-radius: 2px;
}
.tag {
  display: flex;
  align-items: center;
  gap: 4px;
  height: 19px;
  margin-bottom: 5px;
  padding: 0 4px;
  border-radius: 2px;
  background: #000;
  color: #fff;
  font-weight: 500;
}
.tag button { color: #bbb; }
.caret { width: 1px; height: 14px; margin: 3px 0 0 12px; background: #333; }
.multi input { flex: 1; min-width: 0; border: 0; outline: 0; }
.radius {
  height: 33px;
  margin-top: 7px;
  padding: 0 12px;
  border: 1px solid #ced4da;
  border-radius: 2px;
  color: #7b8087;
  outline: 0;
}
.modal-foot { display: flex; justify-content: flex-end; gap: 10px; margin-top: 175px; padding-right: 2px; }
.modal-foot .btn { width: 117px; height: 33px; }
.outline { border: 1px solid #1565f5; color: #1565f5; }
.coral { background: #f27c76; color: #fff; }
```
